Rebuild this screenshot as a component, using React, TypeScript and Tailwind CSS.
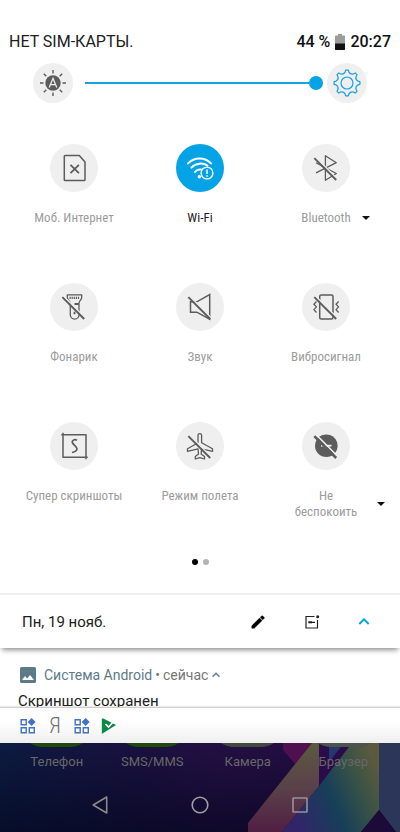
import React from "react";

const condensed =
  "font-['Roboto_Condensed','Liberation_Sans_Narrow',Roboto,sans-serif]";

function Glyph({ children }: { children: React.ReactNode }) {
  return (
    <svg
      viewBox="0 0 48 48"
      className="size-12"
      fill="none"
      stroke="currentColor"
      strokeWidth="1.3"
      strokeLinejoin="round"
      aria-hidden="true"
    >
      {children}
    </svg>
  );
}

function Slash() {
  return (
    <>
      <path d="M13.6 13.1 35.4 34.9" stroke="#efefef" strokeWidth="1.4" />
      <path d="M12.3 14.2 34.2 36" strokeWidth="1.9" />
    </>
  );
}

const simIcon = (
  <Glyph>
    <path d="M14.3 12.3a.8.8 0 0 1 .8-.8h14.2l5.7 6.5v17.7a.8.8 0 0 1-.8.8H15.1a.8.8 0 0 1-.8-.8z" strokeWidth="1.5" />
    <path d="m20.5 20.9 8.4 8.2m0-8.2-8.4 8.2" strokeWidth="1.8" />
  </Glyph>
);

const wifiIcon = (
  <Glyph>
    <g strokeWidth="2" strokeLinecap="round">
      <path d="M12 19.4C18.2 12.7 29 12.7 35 19.4" />
      <path d="M15.4 23.6C20 18.7 27 18.7 31.4 21.5" />
      <path d="M19 27.8c1.8-2 4-2.6 6-2.2" />
    </g>
    <circle cx="23.3" cy="32.8" r="1.7" fill="currentColor" stroke="none" />
    <circle cx="31" cy="29" r="5.9" strokeWidth="1.4" />
    <path d="M31 25.5v4.6m0 1.2v1.5" strokeWidth="1.5" />
  </Glyph>
);

const bluetoothIcon = (
  <Glyph>
    <path d="m14 28.8 20.3-10.1-10.9-7v24.6l10.9-6.8L14 18.7" />
    <Slash />
  </Glyph>
);

const torchIcon = (
  <Glyph>
    <path d="M17.3 11.8h14.4v2.7c0 2.3-2.7 3.4-2.7 5.7v11.6a4.35 4.35 0 0 1-8.7 0V20.2c0-2.3-3-3.4-3-5.7z" />
    <path d="M19.5 14.8h10.5" strokeDasharray="1.2 .9" strokeWidth="2.2" />
    <path d="M24.5 21h4.3M24.5 28.8v2.5" strokeWidth="1.8" />
    <Slash />
  </Glyph>
);

const soundIcon = (
  <Glyph>
    <path d="M14.5 18.8h6.3l12.9-7.2v24.6l-12.9-7h-6.3z" strokeWidth="1.5" strokeLinejoin="miter" />
    <Slash />
  </Glyph>
);

const vibrateIcon = (
  <Glyph>
    <rect x="17.7" y="12" width="13.3" height="24" rx="1.5" strokeWidth="1.5" />
    <path d="m14.5 18.5-2.6 2.7 2.6 2.7-2.6 2.7 2.6 2.9M36.600 18.500 34 21.200l2.600 2.700-2.600 2.700 2.600 2.900" />
    <Slash />
  </Glyph>
);

const captureIcon = (
  <Glyph>
    <path d="M11.3 12.7H36v24.6M13 10.7V35.2h24.7" strokeWidth="1.5" />
    <path d="M27 18.3c-2.6-1.5-5.4.2-4.5 2.6.8 2 4.5 3.7 4.5 6 0 1.9-2.4 2.9-5 3.6" strokeWidth="1.7" />
  </Glyph>
);

const planeIcon = (
  <Glyph>
    <path d="M22 13.2c0-2.2 3.6-2.2 3.6 0v7.6l10.9 5.900v2.700l-10.900-2.600-.5 5.200 3.400 2.600V37l-4.700-1.400L19.300 37v-2.400l3.200-2.600-.5-5.200-10.500 2.600v-2.700L22 20.800z" />
    <Slash />
  </Glyph>
);

const quietIcon = (
  <Glyph>
    <circle cx="24.3" cy="23.8" r="11.3" fill="currentColor" stroke="none" />
    <path d="M19 23.7h10.500" stroke="#efefef" strokeWidth="1.800" />
    <path d="M13.300 11.900 36.600 35.200" stroke="#efefef" strokeWidth="1.600" />
    <path d="M12.3 14.2 34.2 36" strokeWidth="2.600" />
  </Glyph>
);

type Tile = {
  icon: React.ReactNode;
  label: React.ReactNode;
  active?: boolean;
  more?: boolean;
  multi?: boolean;
};

const tiles: Tile[] = [
  { icon: simIcon, label: "Моб. Интернет" },
  { icon: wifiIcon, label: "Wi-Fi", active: true },
  { icon: bluetoothIcon, label: "Bluetooth", more: true },
  { icon: torchIcon, label: "Фонарик" },
  { icon: soundIcon, label: "Звук" },
  { icon: vibrateIcon, label: "Вибросигнал" },
  { icon: captureIcon, label: "Супер скриншоты" },
  { icon: planeIcon, label: "Режим полета" },
  {
    icon: quietIcon,
    label: (
      <>
        Не
        <br />
        беспокоить
      </>
    ),
    more: true,
    multi: true,
  },
];

function TileButton({ tile }: { tile: Tile }) {
  return (
    <button
      type="button"
      aria-pressed={!!tile.active}
      className="flex min-h-[98px] flex-col items-center gap-[18px]"
    >
      <span
        className={
          tile.active
            ? "rounded-full bg-[#04a3e6] text-white"
            : "rounded-full bg-[#efefef] text-[#5c5c5c]"
        }
      >
        {tile.icon}
      </span>
      <span
        className={`relative text-[13px] leading-4 whitespace-nowrap ${condensed} ${
          tile.active ? "text-[#202020]" : "text-[#9c9c9c]"
        } ${tile.multi ? "w-20" : ""}`}
      >
        {tile.label}
        {tile.more && (
          <svg viewBox="0 0 8 4" className="absolute top-1/2 left-full ml-[11px] h-1 w-2 -translate-y-1/2" aria-hidden="true">
            <path d="M0 0h8L4 4z" fill="#111" />
          </svg>
        )}
      </span>
    </button>
  );
}

function AutoBrightness() {
  return (
    <svg viewBox="0 0 40 40" className="size-10" aria-hidden="true">
      <circle cx="20" cy="20" r="7.7" fill="#5c5c5c" />
      <path
        d="M20 7v3.5M20 29.5V33M7 20h3.5M29.5 20H33M10.8 10.8l2.5 2.5M26.7 26.7l2.5 2.5M10.8 29.2l2.5-2.5M26.7 13.3l2.5-2.5"
        stroke="#5c5c5c"
        strokeWidth="1.4"
      />
      <path d="m16.2 24.4 3.8-9 3.8 9M17.6 21.7h4.8" stroke="#efefef" strokeWidth="1.2" fill="none" />
    </svg>
  );
}

function Gear() {
  const points: string[] = [];
  for (let i = 0; i < 8; i++) {
    const at = (deg: number, r: number) => {
      const a = ((i * 45 + deg - 90) * Math.PI) / 180;
      return `${(20 + r * Math.cos(a)).toFixed(2)} ${(20 + r * Math.sin(a)).toFixed(2)}`;
    };
    points.push(
      `${i === 0 ? "M" : "L"}${at(-6, 13)}L${at(6, 13)}L${at(10, 11)}Q${at(22.5, 9)} ${at(35, 11)}`
    );
  }
  return (
    <svg viewBox="0 0 40 40" className="size-10" fill="none" stroke="#189fdc" strokeWidth="1.2" strokeLinejoin="round" aria-hidden="true">
      <path d={points.join("") + "Z"} />
      <circle cx="20" cy="20" r="6" />
    </svg>
  );
}

function Battery() {
  return (
    <svg viewBox="0 0 10 16" className="h-4 w-[10px]" aria-hidden="true">
      <path d="M3 0h4v1.5h2.3a.7.7 0 0 1 .7.7V10H0V2.2a.7.7 0 0 1 .7-.7H3z" fill="#9c9c9c" />
      <path d="M0 9.5h10v5.8a.7.7 0 0 1-.7.7H.7a.7.7 0 0 1-.7-.7z" fill="#111" />
    </svg>
  );
}

function Widgets() {
  return (
    <svg viewBox="0 0 16 16" className="size-4" fill="none" stroke="#4273c0" strokeWidth="1.4" aria-hidden="true">
      <path d="M1.2 1.7h5v5h-5zM1.2 9.8h5v5h-5zM9.3 9.8h5v5h-5z" />
      <path d="m11.6 0 4 4-4 4-4-4z" fill="#4273c0" stroke="none" />
    </svg>
  );
}

function Wallpaper() {
  return (
    <svg viewBox="0 0 400 89" preserveAspectRatio="none" className="absolute inset-0 size-full" aria-hidden="true">
      <defs>
        <linearGradient id="night" x1="0" y1="0" x2="1" y2="0">
          <stop offset="0" stopColor="#0d1b42" />
          <stop offset=".35" stopColor="#1a1140" />
          <stop offset=".55" stopColor="#241044" />
          <stop offset="1" stopColor="#240a42" />
        </linearGradient>
        <linearGradient id="dusk" x1="0" y1="0" x2="0" y2="1">
          <stop offset="0" stopColor="#000418" stopOpacity="0" />
          <stop offset="1" stopColor="#000418" stopOpacity=".6" />
        </linearGradient>
        <linearGradient id="clay" x1="0" y1="0" x2="0" y2="1">
          <stop offset="0" stopColor="#5d5840" />
          <stop offset=".5" stopColor="#5a414a" />
          <stop offset="1" stopColor="#501f43" />
        </linearGradient>
        <linearGradient id="sea" gradientUnits="userSpaceOnUse" x1="290" y1="70" x2="380" y2="30">
          <stop offset="0" stopColor="#33246a" />
          <stop offset=".45" stopColor="#173f59" />
          <stop offset=".75" stopColor="#385246" />
          <stop offset="1" stopColor="#5b5a3e" />
        </linearGradient>
      </defs>
      <path d="M0 0h400v89H0z" fill="url(#night)" />
      <path d="M0 0h400v89H0z" fill="url(#dusk)" />
      <path d="M283 0h29l-17 21-12-14z" fill="#50104f" />
      <path d="M312 0h7v43l-37 46h-34v-9z" fill="url(#clay)" />
      <path d="M319 0h36l-36 43z" fill="#2b0c4b" />
      <path d="M329 0h15l-15 19z" fill="#26376d" />
      <path d="M352 0h27v67l-18 22h-79l37-46z" fill="url(#sea)" />
      <path d="M379 0h21v89h-4l-17-22z" fill="#2b3658" />
      <path d="M379 67 361 89h35z" fill="#1c0a38" />
      <path d="M30 0h53q-6 4-13 4H43q-7 0-13-4zM126 0h53q-6 4-13 4h-27q-7 0-13-4z" fill="#21480f" />
      <path d="M221 0h53q-6 4-13 4h-27q-7 0-13-4z" fill="#424940" />
      <path d="M318 0h53q-6 4-13 4h-27q-7 0-13-4z" fill="#4c5350" />
    </svg>
  );
}

export default function App() {
  return (
    <main className="flex min-h-screen flex-col bg-white font-[Roboto,sans-serif] text-[#202020]">
      <header className="flex items-center justify-between px-[9px] pt-8 text-base leading-5">
        <span>НЕТ SIM-КАРТЫ.</span>
        <div className="flex items-center gap-[5px] font-medium text-[#111]">
          <span>44 %</span>
          <Battery />
          <span>20:27</span>
        </div>
      </header>

      <div className="mt-[11px] flex items-center px-[33px]">
        <button type="button" aria-label="Автояркость" className="rounded-full bg-[#efefef]">
          <AutoBrightness />
        </button>
        <input
          type="range"
          min="0"
          max="100"
          defaultValue="100"
          aria-label="Яркость"
          className="mr-1 ml-3 h-5 min-w-0 flex-1 appearance-none bg-transparent [&::-webkit-slider-runnable-track]:h-0.5 [&::-webkit-slider-runnable-track]:bg-[#18a3e0] [&::-webkit-slider-thumb]:-mt-1.5 [&::-webkit-slider-thumb]:size-3.5 [&::-webkit-slider-thumb]:appearance-none [&::-webkit-slider-thumb]:rounded-full [&::-webkit-slider-thumb]:bg-[#04a3e6]"
        />
        <button type="button" aria-label="Настройки" className="rounded-full bg-[#efefef]">
          <Gear />
        </button>
      </div>

      <section className="mt-[41px] grid grid-cols-3 gap-y-[41px] px-[11px]">
        {tiles.map((tile, i) => (
          <TileButton key={i} tile={tile} />
        ))}
      </section>

      <div className="mt-[39px] flex justify-center gap-[5px]">
        <span className="size-1.5 rounded-full bg-black" />
        <span className="size-1.5 rounded-full bg-[#b4b4b4]" />
      </div>

      <div className="z-10 mt-7 flex h-[55px] items-center border-t-2 border-[#eee] bg-white pr-[30px] pl-[22px] shadow-[0_4px_5px_-2px_rgba(0,0,0,0.45)]">
        <span className="flex-1 text-[15px] leading-5">Пн, 19 нояб.</span>
        <div className="flex items-center gap-[38px]">
          <button type="button" aria-label="Изменить">
            <svg viewBox="0 0 18 18" className="size-4" aria-hidden="true">
              <path d="M2 13.3 10.8 4.500l2.800 2.800L4.800 16H2zM11.600 3.700 13 2.300a1 1 0 0 1 1.400 0l1.400 1.400a1 1 0 0 1 0 1.400l-1.400 1.400z" fill="#000" stroke="#000" strokeWidth=".5" />
            </svg>
          </button>
          <button type="button" aria-label="Уведомления">
            <svg viewBox="0 0 16 16" className="size-4" fill="none" stroke="#222" strokeWidth="1.2" aria-hidden="true">
              <path d="M10.5 2.5h-8.500v11.500h11.500v-8M4.500 8.300h6.500" />
              <path d="M4.500 8.300h3.500" strokeWidth="2" />
              <circle cx="13.700" cy="2.700" r="1.500" fill="#222" stroke="none" />
            </svg>
          </button>
          <button type="button" aria-label="Свернуть">
            <svg viewBox="0 0 12 16" className="h-4 w-3" fill="none" stroke="#04a3e6" strokeWidth="2" aria-hidden="true">
              <path d="m1.300 10 4.700-4.700L10.700 10" />
            </svg>
          </button>
        </div>
      </div>

      <article className="h-[59px] overflow-hidden pt-[17px]">
        <div className="flex items-center pl-5 text-sm leading-5 text-[#757575]">
          <svg viewBox="0 0 16 16" className="mr-2 size-4" aria-hidden="true">
            <rect width="16" height="16" rx="1.5" fill="#5c7b87" />
            <path d="m2 13 3-4 2.200 2.600L10 8l4 5z" fill="#fff" />
          </svg>
          <span className="text-[#5c7b87]">Система Android</span>
          <span className="mx-[3px]">•</span>
          <span>сейчас</span>
          <svg viewBox="0 0 8 8" className="ml-1 size-2" fill="none" stroke="#5c7b87" strokeWidth="1.4" aria-hidden="true">
            <path d="m.6 5.7 3.400-3.500 3.400 3.500" />
          </svg>
        </div>
        <p className="mt-1.5 pl-[18px] text-[15px] leading-5 whitespace-nowrap">Скриншот сохранен</p>
      </article>

      <div className="flex h-9 items-center gap-[11px] border-t border-[#cfcfcf] bg-gradient-to-b from-white from-40% to-[#efefef] pl-5 shadow-[0_-1px_1px_rgba(0,0,0,0.08)]">
        <Widgets />
        <span className="w-4 text-center font-['Roboto_Condensed','Liberation_Sans_Narrow',Roboto,sans-serif] text-[22px] leading-5 font-light text-[#707070]">Я</span>
        <Widgets />
        <svg viewBox="0 0 16 16" className="size-4" aria-hidden="true">
          <path d="M.8.500h1.500L15 7 1.500 15.500H.8z" fill="#078a48" />
          <path d="m4.500 6 3 3 6-6.500" stroke="#fff" strokeWidth="1.6" fill="none" />
        </svg>
      </div>

      <footer className="relative min-h-[89px] flex-1">
        <Wallpaper />
        <div className="relative grid grid-cols-4 px-[9px] pt-2.5 text-center text-[13px] leading-[18px] text-[#686868]">
          <span>Телефон</span>
          <span>SMS/MMS</span>
          <span>Камера</span>
          <span>Браузер</span>
        </div>
        <nav className="relative mt-6 flex justify-center gap-20">
          <button type="button" aria-label="Назад">
            <svg viewBox="0 0 20 20" className="size-5" fill="none" stroke="#898989" strokeWidth="1.6" strokeLinejoin="round" aria-hidden="true">
              <path d="M16.7 2v16L3.2 10z" />
            </svg>
          </button>
          <button type="button" aria-label="Домой">
            <svg viewBox="0 0 20 20" className="size-5" fill="none" stroke="#a0a0a0" strokeWidth="1.6" aria-hidden="true">
              <circle cx="10" cy="10" r="7.8" />
            </svg>
          </button>
          <button type="button" aria-label="Недавние">
            <svg viewBox="0 0 20 20" className="size-5" fill="none" stroke="#989398" strokeWidth="1.6" aria-hidden="true">
              <rect x="3" y="3" width="14" height="14" rx=".5" />
            </svg>
          </button>
        </nav>
      </footer>
    </main>
  );
}
